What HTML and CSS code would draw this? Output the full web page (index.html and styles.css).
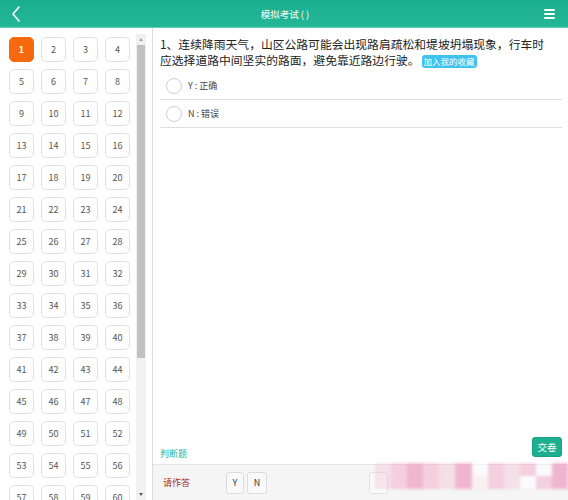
FILE: index.html
```html
<!DOCTYPE html>
<html lang="zh">
<head>
<meta charset="utf-8">
<title>模拟考试</title>
<link rel="stylesheet" href="styles.css">
</head>
<body>
<div class="app">
  <header class="topbar">
    <svg class="back" width="12" height="18" viewBox="0 0 12 18"><polyline points="9,2 3,9 9,16" fill="none" stroke="#fff" stroke-width="1.6" stroke-linecap="round" stroke-linejoin="round"/></svg>
    <div class="title">模拟考试 ( )</div>
    <div class="menu"><span></span><span></span><span></span></div>
  </header>
  <div class="main">
    <aside class="sidebar">
      <div class="grid">
        <div class="num active">1</div><div class="num">2</div><div class="num">3</div><div class="num">4</div>
        <div class="num">5</div><div class="num">6</div><div class="num">7</div><div class="num">8</div>
        <div class="num">9</div><div class="num">10</div><div class="num">11</div><div class="num">12</div>
        <div class="num">13</div><div class="num">14</div><div class="num">15</div><div class="num">16</div>
        <div class="num">17</div><div class="num">18</div><div class="num">19</div><div class="num">20</div>
        <div class="num">21</div><div class="num">22</div><div class="num">23</div><div class="num">24</div>
        <div class="num">25</div><div class="num">26</div><div class="num">27</div><div class="num">28</div>
        <div class="num">29</div><div class="num">30</div><div class="num">31</div><div class="num">32</div>
        <div class="num">33</div><div class="num">34</div><div class="num">35</div><div class="num">36</div>
        <div class="num">37</div><div class="num">38</div><div class="num">39</div><div class="num">40</div>
        <div class="num">41</div><div class="num">42</div><div class="num">43</div><div class="num">44</div>
        <div class="num">45</div><div class="num">46</div><div class="num">47</div><div class="num">48</div>
        <div class="num">49</div><div class="num">50</div><div class="num">51</div><div class="num">52</div>
        <div class="num">53</div><div class="num">54</div><div class="num">55</div><div class="num">56</div>
        <div class="num">57</div><div class="num">58</div><div class="num">59</div><div class="num">60</div>
      </div>
      <div class="scrollbar">
        <div class="arrow up"></div>
        <div class="thumb"></div>
        <div class="track-rest"></div>
        <div class="arrow down"></div>
      </div>
    </aside>
    <section class="content">
      <div class="question">1、连续降雨天气，山区公路可能会出现路肩疏松和堤坡坍塌现象，行车时应选择道路中间坚实的路面，避免靠近路边行驶。<span class="fav">加入我的收藏</span></div>
      <div class="options">
        <div class="option"><span class="radio"></span><span class="opt-text">Y : 正确</span></div>
        <div class="option"><span class="radio"></span><span class="opt-text">N : 错误</span></div>
      </div>
      <div class="spacer"></div>
      <div class="meta">
        <span class="type">判断题</span>
        <span class="submit">交卷</span>
      </div>
      <div class="answerbar">
        <span class="prompt">请作答</span>
        <span class="ans ans-y">Y</span>
        <span class="ans ans-n">N</span>
        <span class="ans ans-blank"></span>
      </div>
    </section>
  </div>
  <div class="watermark">
    <span></span><span></span><span></span><span></span><span></span><span></span><span></span><span></span>
    <span></span><span></span><span></span><span></span><span></span><span></span><span></span><span></span>
    <span></span><span></span><span></span><span></span><span></span><span></span><span></span><span></span>
  </div>
</div>
</body>
</html>
```
FILE: styles.css
```css
* { box-sizing: border-box; }
html, body { margin: 0; padding: 0; }
body {
  width: 568px;
  height: 500px;
  overflow: hidden;
  background: #fff;
  font-family: "Noto Sans CJK SC", "Noto Sans", sans-serif;
  color: #333;
}
.app {
  position: relative;
  width: 568px;
  height: 500px;
  display: flex;
  flex-direction: column;
}
.topbar {
  height: 28px;
  flex: none;
  background: linear-gradient(#1caf8f, #22b697);
  border-bottom: 1px solid #5fcfb6;
  display: flex;
  align-items: center;
  padding: 0 13px 0 10px;
}
.back { display: block; }
.title {
  flex: 1;
  text-align: center;
  color: #fff;
  font-size: 9.5px;
  line-height: 12px;
  padding-left: 4px;
}
.menu {
  width: 11px;
  display: flex;
  flex-direction: column;
  gap: 2px;
}
.menu span {
  display: block;
  height: 2px;
  background: #fff;
  border-radius: 1px;
}
.main {
  flex: 1;
  display: flex;
  min-height: 0;
}
.sidebar {
  width: 153px;
  flex: none;
  border-right: 1px solid #dcdcdc;
  display: flex;
  padding-right: 6px;
  overflow: hidden;
}
.grid {
  width: 136px;
  padding: 9px 0 0 9px;
  display: grid;
  grid-template-columns: repeat(4, 25px);
  grid-auto-rows: 25px;
  gap: 7px;
  align-content: start;
  overflow: hidden;
}
.num {
  border: 1px solid #e0e0e0;
  border-radius: 5px;
  display: flex;
  align-items: center;
  justify-content: center;
  font-size: 9px;
  color: #555;
  background: #fff;
}
.num.active {
  background: #f8680d;
  border-color: #f8680d;
  color: #fff;
  font-weight: bold;
}
.scrollbar {
  width: 10px;
  margin-top: 6px;
  background: #f1f1f1;
  display: flex;
  flex-direction: column;
  align-items: center;
}
.arrow {
  width: 0;
  height: 0;
  border-left: 2.5px solid transparent;
  border-right: 2.5px solid transparent;
  margin: 4px 0;
  flex: none;
}
.arrow.up { border-bottom: 3px solid #a3a3a3; }
.arrow.down { border-top: 3px solid #606060; }
.thumb {
  width: 8px;
  height: 313px;
  background: #c1c1c1;
  flex: none;
}
.track-rest { flex: 1; }
.content {
  flex: 1;
  display: flex;
  flex-direction: column;
  min-width: 0;
}
.question {
  padding: 8px 0 0 7px;
  width: 395px;
  font-size: 11.8px;
  line-height: 16px;
  color: #222;
}
.fav {
  display: inline-block;
  background: #3ec3ef;
  color: #fff;
  font-size: 8.5px;
  line-height: 13px;
  padding: 0 2px;
  border-radius: 3px;
  margin-left: 2px;
  vertical-align: middle;
}
.options {
  margin: 4px 6px 0 7px;
}
.option {
  height: 28px;
  border-bottom: 1px solid #dedede;
  display: flex;
  align-items: center;
  padding-left: 6px;
  gap: 6px;
}
.radio {
  width: 16px;
  height: 16px;
  border: 1px solid #cfcfcf;
  border-radius: 50%;
  background: #fff;
}
.opt-text {
  font-size: 9px;
  color: #444;
}
.spacer { flex: 1; }
.meta {
  display: flex;
  justify-content: space-between;
  align-items: flex-end;
  padding: 0 6px 4px 7px;
}
.type {
  font-size: 9px;
  line-height: 12px;
  color: #2bb49c;
}
.submit {
  width: 30px;
  height: 20px;
  margin-bottom: 3px;
  background: #1db090;
  border: 1px solid #17a283;
  border-radius: 3px;
  color: #fff;
  font-size: 9.5px;
  display: flex;
  align-items: center;
  justify-content: center;
}
.answerbar {
  height: 36px;
  flex: none;
  background: #f5f5f5;
  border-top: 1px solid #e4e4e4;
  display: flex;
  align-items: center;
  padding-left: 10px;
}
.prompt {
  font-size: 9px;
  color: #a03030;
  width: 63px;
}
.ans {
  height: 22px;
  border: 1px solid #dcdcdc;
  border-radius: 3px;
  background: #f9f9f9;
  font-size: 9px;
  color: #333;
  display: flex;
  align-items: center;
  justify-content: center;
}
.ans-y { width: 18px; }
.ans-n { width: 20px; margin-left: 3px; }
.ans-blank { width: 19px; margin-left: 102px; border-color: #e2e2e2; }
.watermark {
  position: absolute;
  left: 375px;
  top: 463px;
  width: 193px;
  height: 26px;
  display: grid;
  grid-template-columns: repeat(12, 1fr);
  grid-template-rows: 1fr 1fr;
  filter: blur(1.5px);
  pointer-events: none;
}
.watermark span { background: rgba(240, 150, 190, 0.4); }
.watermark span:nth-child(3n) { background: rgba(236, 120, 170, 0.5); }
.watermark span:nth-child(4n+1) { background: rgba(245, 185, 210, 0.35); }
.watermark span:nth-child(7) { background: rgba(255, 255, 255, 0.6); }
.watermark span:nth-child(11) { background: rgba(255, 255, 255, 0.5); }
.watermark span:nth-child(19) { background: rgba(255, 235, 240, 0.5); }
.watermark span:nth-child(22) { background: rgba(255, 255, 255, 0.6); }
```
